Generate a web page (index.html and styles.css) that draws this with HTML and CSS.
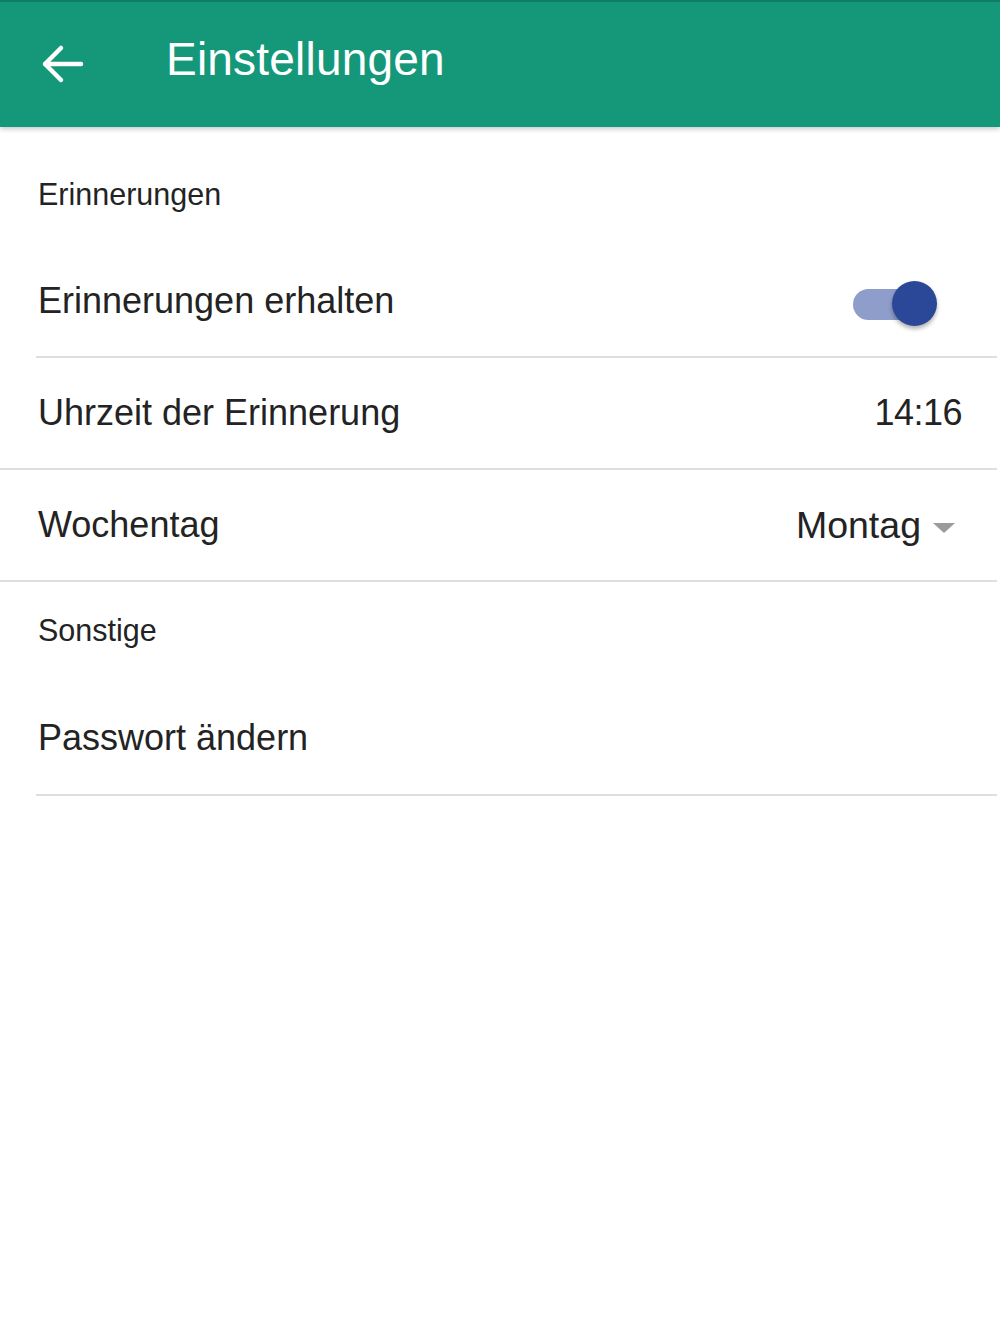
FILE: index.html
```html
<!DOCTYPE html>
<html lang="de">
<head>
    <meta charset="UTF-8">
    <title>Einstellungen</title>
    <link rel="stylesheet" href="styles.css">
</head>
<body>
    <header class="toolbar">
        <button class="back-button" aria-label="Zurück">
            <svg width="44" height="40" viewBox="0 0 44 40">
                <path d="M41 20 H5 M21 4 L5 20 L21 36" fill="none" stroke="#fff" stroke-width="4.5" stroke-linecap="round" stroke-linejoin="round"/>
            </svg>
        </button>
        <h1 class="toolbar-title">Einstellungen</h1>
    </header>

    <main class="settings-list">
        <div class="section-title">Erinnerungen</div>

        <div class="row row-inset">
            <span class="row-label">Erinnerungen erhalten</span>
            <span class="toggle">
                <span class="toggle-track"></span>
                <span class="toggle-knob"></span>
            </span>
        </div>

        <div class="row">
            <span class="row-label">Uhrzeit der Erinnerung</span>
            <span class="row-value time">14:16</span>
        </div>

        <div class="row">
            <span class="row-label">Wochentag</span>
            <span class="row-value select">Montag <span class="caret"></span></span>
        </div>

        <div class="section-title">Sonstige</div>

        <div class="row row-inset row-last">
            <span class="row-label">Passwort ändern</span>
        </div>
    </main>
</body>
</html>
```

FILE: styles.css
```css
/* Farben */
:root {
    --primary-color: #15977a;
    --primary-dark: #0e7d64;
    --text-color: #232323;
    --line-color: #dedede;
    --toggle-color: #2b4797;
    --toggle-track: #8f9dcb;
}

body {
    margin: 0;
    padding: 0;
    background: #fff;
    font-family: "Liberation Sans", Arial, sans-serif;
    color: var(--text-color);
}

/* Kopfzeile */
.toolbar {
    display: flex;
    align-items: center;
    height: 125px;
    background-color: var(--primary-color);
    border-top: 2px solid var(--primary-dark);
    box-shadow: 0 2px 5px rgba(0, 0, 0, 0.22);
    position: relative;
}

.back-button {
    display: flex;
    align-items: center;
    justify-content: center;
    width: 44px;
    height: 40px;
    margin-left: 40px;
    margin-bottom: 2px;
    padding: 0;
    border: none;
    background: transparent;
}

.toolbar-title {
    margin: 0 0 12px 82px;
    font-size: 46px;
    font-weight: normal;
    color: #fff;
    letter-spacing: 0.2px;
}

/* Liste */
.settings-list {
    padding-top: 19px;
    margin-right: 3px;
}

.section-title {
    display: flex;
    align-items: center;
    height: 96px;
    padding: 0 0 4px 38px;
    font-size: 30.5px;
}

.row {
    display: flex;
    align-items: center;
    justify-content: space-between;
    height: 110px;
    padding: 0 34px 0 38px;
    border-bottom: 2px solid var(--line-color);
}

.row-inset {
    margin-left: 36px;
    padding-left: 2px;
}

.row-last {
    height: 112px;
}

.row-label {
    font-size: 36px;
}

.row-value {
    font-size: 36px;
}

.time {
    letter-spacing: -0.5px;
    margin-right: 1px;
}

.select {
    display: flex;
    align-items: center;
    margin-right: 8px;
    font-size: 37.5px;
}

.caret {
    width: 0;
    height: 0;
    margin-left: 12px;
    margin-top: 6px;
    border-left: 11px solid transparent;
    border-right: 11px solid transparent;
    border-top: 10px solid #9b9b9b;
}

/* Schalter */
.toggle {
    position: relative;
    width: 84px;
    height: 46px;
    margin-right: 26px;
    margin-top: 6px;
}

.toggle-track {
    position: absolute;
    left: 0;
    top: 8px;
    width: 70px;
    height: 31px;
    border-radius: 16px;
    background-color: var(--toggle-track);
}

.toggle-knob {
    position: absolute;
    right: 0;
    top: 0;
    width: 45px;
    height: 45px;
    border-radius: 50%;
    background-color: var(--toggle-color);
    box-shadow: 0 3px 4px rgba(0, 0, 0, 0.3);
}
```
